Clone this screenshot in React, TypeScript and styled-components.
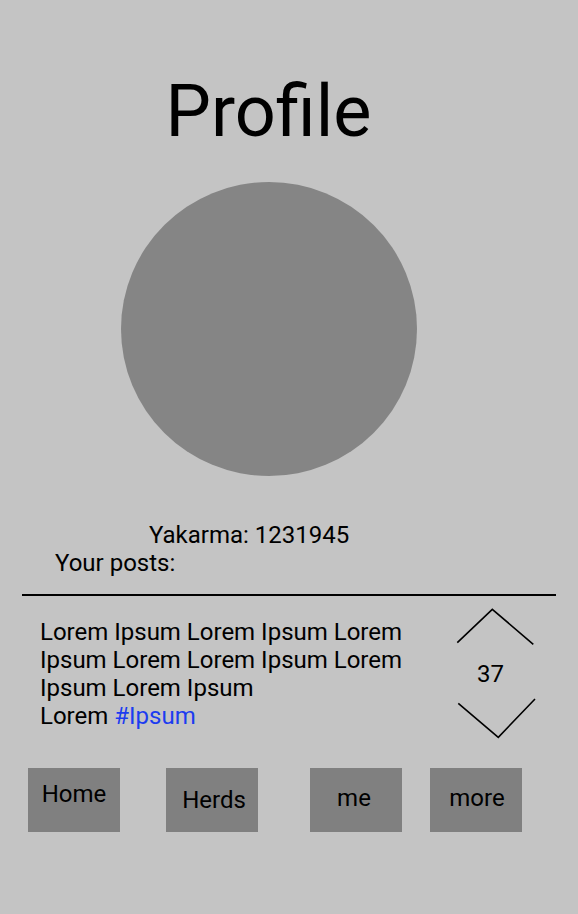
import React from "react";
import styled, { createGlobalStyle } from "styled-components";

const GlobalStyle = createGlobalStyle`
  html, body {
    margin: 0;
    padding: 0;
    background: #c4c4c4;
  }
  * { box-sizing: border-box; }
`;

const Page = styled.div`
  width: 578px;
  min-height: 914px;
  background: #c4c4c4;
  color: #000;
  font-family: Roboto, "Liberation Sans", sans-serif;
  font-size: 24px;
  line-height: 28px;
  padding-top: 70px;
  overflow: hidden;
`;

const Header = styled.header`
  width: 537px;
  display: flex;
  flex-direction: column;
  align-items: center;
`;

const Title = styled.h1`
  margin: 0;
  font-size: 72px;
  line-height: 84px;
  font-weight: 400;
`;

const Avatar = styled.div`
  margin-top: 28px;
  width: 296px;
  height: 294px;
  border-radius: 50%;
  background: #858585;
`;

const Stats = styled.section`
  margin-top: 45px;
  display: flex;
  flex-direction: column;
`;

const StatLine = styled.div<{ $indent: number }>`
  padding-left: ${(p) => p.$indent}px;
`;

const Divider = styled.hr`
  margin: 17px 0 0 22px;
  width: 534px;
  height: 2px;
  border: none;
  background: #000;
`;

const PostRow = styled.article`
  display: flex;
  padding: 0 42px 0 40px;
`;

const PostText = styled.div`
  margin-top: 22px;
  flex: 1;
`;

const PostLine = styled.div``;

const Tag = styled.span`
  color: #1c3cf0;
`;

const Vote = styled.div`
  width: 80px;
  display: flex;
  flex-direction: column;
`;

const ArrowSvg = styled.svg<{ $top: number }>`
  display: block;
  margin-top: ${(p) => p.$top}px;
`;

const Count = styled.div`
  margin-top: 14px;
  padding-left: 21px;
`;

const Nav = styled.nav`
  margin-top: 29px;
  display: flex;
`;

const NavButton = styled.button<{ $left: number; $top: number; $shift: number }>`
  margin-left: ${(p) => p.$left}px;
  width: 92px;
  height: 64px;
  border: none;
  padding: ${(p) => p.$top}px ${(p) => (p.$shift < 0 ? -p.$shift * 2 : 0)}px 0
    ${(p) => (p.$shift > 0 ? p.$shift * 2 : 0)}px;
  background: #808080;
  color: #000;
  font-family: Roboto, "Liberation Sans", sans-serif;
  font-size: 24px;
  line-height: 28px;
  display: flex;
  justify-content: center;
  align-items: flex-start;
  cursor: pointer;
`;

const navItems = [
  { label: "Home", left: 28, top: 12, shift: 0 },
  { label: "Herds", left: 46, top: 18, shift: 2 },
  { label: "me", left: 52, top: 16, shift: -2 },
  { label: "more", left: 28, top: 16, shift: 1 },
];

export default function App() {
  return (
    <>
      <GlobalStyle />
      <Page>
        <Header>
          <Title>Profile</Title>
          <Avatar />
        </Header>
        <Stats>
          <StatLine $indent={149}>Yakarma: 1231945</StatLine>
          <StatLine $indent={55}>Your posts:</StatLine>
        </Stats>
        <Divider />
        <PostRow>
          <PostText>
            <PostLine>Lorem Ipsum Lorem Ipsum Lorem</PostLine>
            <PostLine>Ipsum Lorem Lorem Ipsum Lorem</PostLine>
            <PostLine>Ipsum Lorem Ipsum</PostLine>
            <PostLine>
              Lorem <Tag>#Ipsum</Tag>
            </PostLine>
          </PostText>
          <Vote>
            <ArrowSvg $top={12} width="80" height="38" viewBox="0 0 80 38">
              <polyline
                points="1.3,34.7 36.3,1.3 77.3,36.3"
                fill="none"
                stroke="#000"
                strokeWidth="1.6"
              />
            </ArrowSvg>
            <Count>37</Count>
            <ArrowSvg $top={9} width="80" height="42" viewBox="0 0 80 42">
              <polyline
                points="2.3,6.3 42.3,40.3 79,2"
                fill="none"
                stroke="#000"
                strokeWidth="1.6"
              />
            </ArrowSvg>
          </Vote>
        </PostRow>
        <Nav>
          {navItems.map((n) => (
            <NavButton key={n.label} $left={n.left} $top={n.top} $shift={n.shift}>
              {n.label}
            </NavButton>
          ))}
        </Nav>
      </Page>
    </>
  );
}
